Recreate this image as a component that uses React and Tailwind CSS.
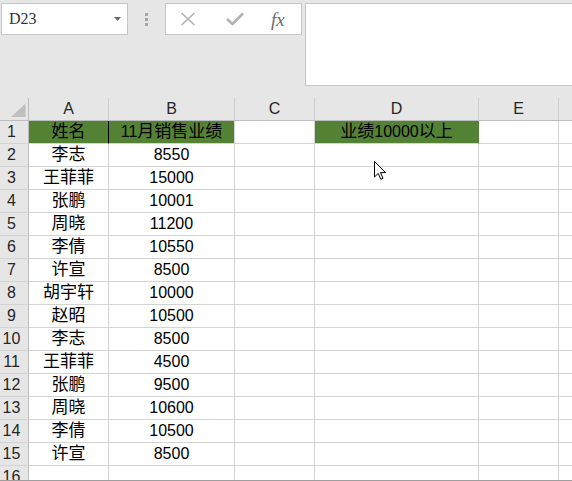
import React from "react";

const rows = [
  ["李志", "8550"],
  ["王菲菲", "15000"],
  ["张鹏", "10001"],
  ["周晓", "11200"],
  ["李倩", "10550"],
  ["许宣", "8500"],
  ["胡宇轩", "10000"],
  ["赵昭", "10500"],
  ["李志", "8500"],
  ["王菲菲", "4500"],
  ["张鹏", "9500"],
  ["周晓", "10600"],
  ["李倩", "10500"],
  ["许宣", "8500"],
  ["", ""],
];

const font = { fontFamily: '"Liberation Sans", "Noto Sans CJK SC", sans-serif' };

// digits are a touch smaller than the CJK glyphs in the sheet
const T = ({ s }) =>
  s.split(/(\d+)/).map((p, i) =>
    /^\d+$/.test(p) ? (
      <span key={i} className="text-[16px]">{p}</span>
    ) : (
      <span key={i}>{p}</span>
    )
  );

const RowHead = ({ n }) => (
  <div className="w-[29px] shrink-0 h-full bg-[#e6e6e6] border-r border-b border-r-[#bdbdbd] border-b-[#d4d4d4] flex items-center justify-center pr-[5px] text-[16px] text-[#262626]">
    {n}
  </div>
);

const App = () => {
  return (
    <div className="w-[572px] h-[481px] bg-[#e6e6e6] overflow-hidden relative text-[17px]" style={font}>
      {/* Formula bar */}
      <div className="h-[98px] flex items-start pt-[3px] pl-[1px]">
        <div className="w-[127px] h-[32px] bg-white border border-[#c6c6c6] flex items-center justify-between pl-[7px] pr-[6px]">
          <span className="text-[#333333] text-[16px]" style={{ fontFamily: '"Liberation Serif", serif' }}>
            D23
          </span>
          <svg width="7" height="4" viewBox="0 0 7 4">
            <path d="M0 0 L7 0 L3.5 4 Z" fill="#6b6b6b" />
          </svg>
        </div>
        <div className="w-[37px] h-[32px] flex flex-col items-center justify-center gap-[2px]">
          <div className="w-[3px] h-[3px] bg-[#a6a6a6]" />
          <div className="w-[3px] h-[3px] bg-[#a6a6a6]" />
          <div className="w-[3px] h-[3px] bg-[#a6a6a6]" />
        </div>
        <div className="w-[137px] h-[32px] bg-white border border-[#c6c6c6] flex items-center pl-[14px]">
          <svg width="16" height="14" viewBox="0 0 16 14">
            <path d="M1.5 1 L14.5 13 M14.5 1 L1.5 13" stroke="#b3b3b3" strokeWidth="1.6" />
          </svg>
          <svg width="18" height="14" viewBox="0 0 18 14" className="ml-[30px]">
            <path d="M1 7 L6.5 12 L17 1.5" stroke="#b3b3b3" strokeWidth="2.6" fill="none" />
          </svg>
          <span
            className="ml-[27px] italic text-[#6b6b6b] text-[19px] leading-none"
            style={{ fontFamily: '"Liberation Serif", serif' }}
          >
            fx
          </span>
        </div>
        <div className="ml-[3px] flex-1 h-[83px] bg-white border border-r-0 border-[#c6c6c6]" />
      </div>

      {/* Grid */}
      <div className="h-[382px] overflow-hidden bg-white border-b border-[#9e9e9e] box-content">
        {/* column headers */}
        <div className="h-[23px] flex bg-[#e6e6e6] border-b border-[#bdbdbd] text-[16px] text-[#262626]">
          <div className="w-[29px] shrink-0 border-r border-[#bdbdbd] relative">
            <svg width="29" height="22" viewBox="0 0 29 22" className="absolute left-0 top-0">
              <path d="M25.5 5.5 L25.5 19 L11 19 Z" fill="#bfbfbf" />
            </svg>
          </div>
          <div className="w-[80px] shrink-0 border-r border-[#cdcdcd] flex items-center justify-center">A</div>
          <div className="w-[126px] shrink-0 border-r border-[#cdcdcd] flex items-center justify-center">B</div>
          <div className="w-[80px] shrink-0 border-r border-[#cdcdcd] flex items-center justify-center">C</div>
          <div className="w-[164px] shrink-0 border-r border-[#cdcdcd] flex items-center justify-center">D</div>
          <div className="w-[80px] shrink-0 border-r border-[#cdcdcd] flex items-center justify-center">E</div>
          <div className="flex-1" />
        </div>

        {/* row 1 */}
        <div className="h-[23px] flex">
          <RowHead n={1} />
          <div className="w-[80px] shrink-0 h-full bg-[#548235] border-r border-b border-r-black border-b-[#d4d4d4] flex items-center justify-center text-black">
            <T s="姓名" />
          </div>
          <div className="w-[126px] shrink-0 h-full bg-[#548235] border-r border-b border-r-[#d4d4d4] border-b-[#d4d4d4] flex items-center justify-center text-black">
            <T s="11月销售业绩" />
          </div>
          <div className="w-[80px] shrink-0 h-full border-r border-b border-[#d4d4d4]" />
          <div className="w-[164px] shrink-0 h-full bg-[#548235] border-r border-b border-r-[#548235] border-b-[#d4d4d4] flex items-center justify-center text-black">
            <T s="业绩10000以上" />
          </div>
          <div className="w-[80px] shrink-0 h-full border-r border-b border-[#d4d4d4]" />
          <div className="flex-1 h-full border-b border-[#d4d4d4]" />
        </div>

        {rows.map((r, i) => (
          <div key={i} className="h-[23px] flex">
            <RowHead n={i + 2} />
            <div className="w-[80px] shrink-0 h-full border-r border-b border-[#d4d4d4] flex items-center justify-center text-black">
              <T s={r[0]} />
            </div>
            <div className="w-[126px] shrink-0 h-full border-r border-b border-[#d4d4d4] flex items-center justify-center text-black">
              <T s={r[1]} />
            </div>
            <div className="w-[80px] shrink-0 h-full border-r border-b border-[#d4d4d4]" />
            <div className="w-[164px] shrink-0 h-full border-r border-b border-[#d4d4d4]" />
            <div className="w-[80px] shrink-0 h-full border-r border-b border-[#d4d4d4]" />
            <div className="flex-1 h-full border-b border-[#d4d4d4]" />
          </div>
        ))}
      </div>

      {/* mouse pointer */}
      <svg width="13" height="20" viewBox="0 0 13 20" className="absolute left-[374px] top-[161px]">
        <path d="M0.5 0.5 L0.5 16 L4.2 12.4 L6.8 18.3 L9 17.3 L6.5 11.6 L11.5 11.6 Z" fill="white" stroke="black" strokeWidth="1" />
      </svg>
    </div>
  );
};

export default App;
